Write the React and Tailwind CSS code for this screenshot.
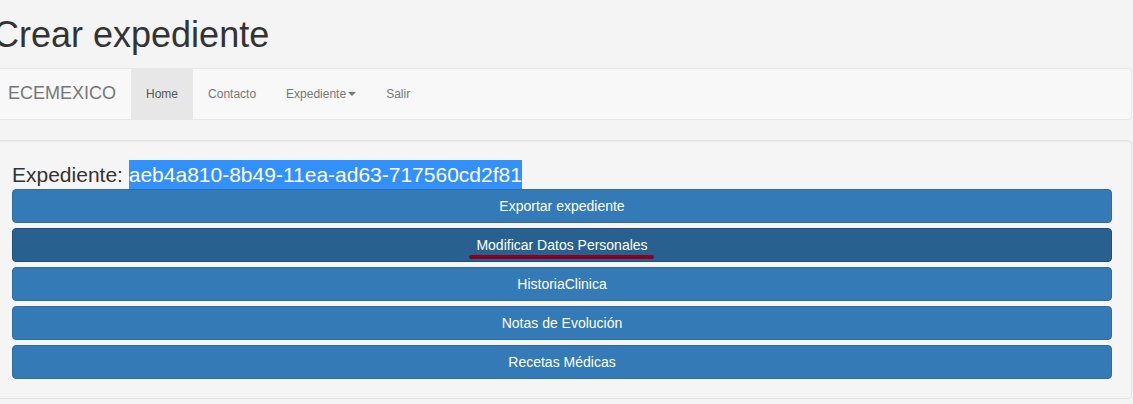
import React from 'react';

const buttons = [
  { label: 'Exportar expediente' },
  { label: 'Modificar Datos Personales', active: true },
  { label: 'HistoriaClinica' },
  { label: 'Notas de Evolución' },
  { label: 'Recetas Médicas' },
];

function NavBar() {
  return (
    <nav className="flex h-[52px] items-stretch rounded border border-[#e7e7e7] bg-[#f8f8f8] text-[12px]">
      <a className="flex items-center px-[15px] text-[18px] text-[#777]">ECEMEXICO</a>
      <a className="flex items-center bg-[#e7e7e7] px-[15px] text-[#555]">Home</a>
      <a className="flex items-center px-[15px] text-[#777]">Contacto</a>
      <a className="flex items-center px-[15px] text-[#777]">
        Expediente
        <span className="ml-[2px] mt-[1px] inline-block h-0 w-0 border-x-[4px] border-t-[4px] border-x-transparent border-t-[#777]" />
      </a>
      <a className="flex items-center px-[15px] text-[#777]">Salir</a>
    </nav>
  );
}

function ActionButton({ label, active }) {
  return (
    <button
      className={
        active
          ? 'relative flex h-[34px] w-full items-center justify-center rounded border border-[#204d74] bg-[#286090] pt-px text-[14px] text-white'
          : 'relative flex h-[34px] w-full items-center justify-center rounded border border-[#2e6da4] bg-[#337ab7] pt-px text-[14px] text-white'
      }
    >
      {label}
      {active && (
        // red pen mark drawn over the button
        <span className="absolute left-[456px] top-[26px] h-[4px] w-[185px] rounded-full bg-[#86001c]" />
      )}
    </button>
  );
}

export default function App() {
  return (
    <div className="min-h-[404px] overflow-hidden bg-[#f4f4f4] font-['Liberation_Sans',Arial,sans-serif] text-[#333]">
      <div className="-ml-[8px] w-[1140px]">
        <h1 className="mt-[15px] mb-[13px] ml-[1px] text-[36px] leading-[39.6px]">Crear expediente</h1>
        <NavBar />
        <div className="mt-[20px] rounded border border-[#e3e3e3] bg-[#f5f5f5] p-[19px] shadow-[inset_0_1px_1px_rgba(0,0,0,0.05)]">
          <div className="text-[21px] leading-[29px]">
            Expediente:{' '}
            <span className="inline-block bg-[#3390ff] leading-[29px] text-white">
              aeb4a810-8b49-11ea-ad63-717560cd2f81
            </span>
          </div>
          <div className="flex flex-col gap-[5px]">
            {buttons.map((b) => (
              <ActionButton key={b.label} label={b.label} active={b.active} />
            ))}
          </div>
        </div>
      </div>
    </div>
  );
}
